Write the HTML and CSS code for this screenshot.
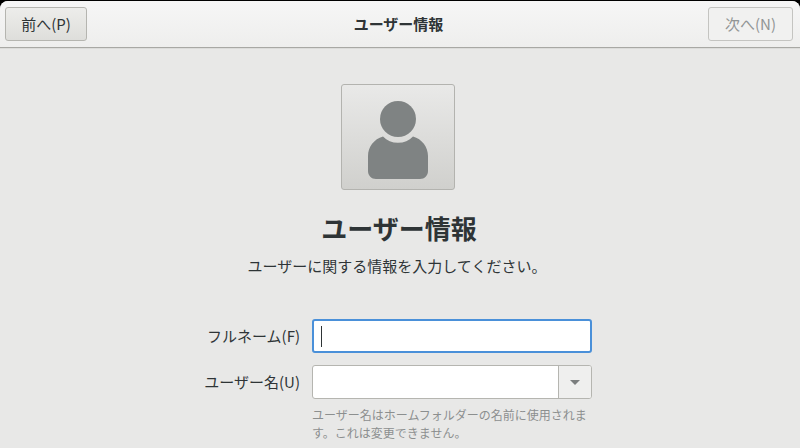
FILE: index.html
```html
<!DOCTYPE html>
<html lang="ja">
<head>
<meta charset="utf-8">
<title>ユーザー情報</title>
<link rel="stylesheet" href="styles.css">
</head>
<body>
<div class="window">
  <header class="headerbar">
    <button class="btn">前へ(P)</button>
    <div class="title">ユーザー情報</div>
    <button class="btn btn-disabled">次へ(N)</button>
  </header>
  <main class="content">
    <div class="avatar">
      <svg width="60" height="78" viewBox="0 0 60 78">
        <circle cx="30" cy="18" r="18" fill="#7f8383"/>
        <path d="M15 35.500C19 39.500 24 41.800 30 41.800C36 41.800 41 39.500 45 35.500C54 38 60 46 60 55L60 70C60 74.500 56.500 78 52 78L8 78C3.500 78 0 74.500 0 70L0 55C0 46 6 38 15 35.500Z" fill="#7f8383"/>
      </svg>
    </div>
    <h1 class="heading">ユーザー情報</h1>
    <p class="sub">ユーザーに関する情報を入力してください。</p>
    <div class="form">
      <label class="label">フルネーム(F)</label>
      <div class="entry entry-focus"><span class="caret"></span></div>
      <label class="label">ユーザー名(U)</label>
      <div class="combo">
        <div class="combo-text"></div>
        <div class="combo-btn"><span class="arrow"></span></div>
      </div>
      <div class="hint">ユーザー名はホームフォルダーの名前に使用されます。これは変更できません。</div>
    </div>
  </main>
</div>
</body>
</html>
```
FILE: styles.css
```css
* { box-sizing: border-box; }
html, body { margin: 0; height: 100%; background: #000; overflow: hidden; }
body { font-family: "Noto Sans CJK JP", "Noto Sans", sans-serif; color: #2e3436; }
.window { width: 800px; height: 448px; display: flex; flex-direction: column; background: #e8e8e7; border-radius: 8px 8px 0 0; overflow: hidden; margin-top: 1px; }
.headerbar { height: 47px; flex: none; display: flex; align-items: flex-start; justify-content: space-between; padding: 6px 5px 0; background: linear-gradient(#f6f6f6, #eeeeed); border-bottom: 1px solid #a8a8a4; position: relative; box-shadow: 0 1px 0 #dcdcda; }
.btn { width: 82px; height: 34px; font: 15px/20px "Noto Sans CJK JP", "Noto Sans", sans-serif; color: #2e3436; border: 1px solid #b5b5b0; border-radius: 3px; background: linear-gradient(#ededeb, #dededb); padding: 0 0 1px; }
.btn-disabled { color: #929595; background: #f1f1f0; border-color: #c4c4c1; width: 85px; margin-right: 2px; }
.title { font-size: 15px; font-weight: 700; line-height: 34px; margin-left: 2px; }
.content { flex: 1; display: flex; flex-direction: column; align-items: center; padding-top: 36px; }
.avatar { width: 114px; height: 106px; border: 1px solid #b3b3af; border-radius: 3px; background: linear-gradient(#e9e9e8, #d0d0cd); display: flex; justify-content: center; align-items: flex-end; padding-bottom: 10px; margin-left: -4px; }
.heading { font-size: 26px; line-height: 36px; font-weight: 700; margin: 20px 0 0 -2px; }
.sub { font-size: 15px; line-height: 20px; margin: 10px 0 0 -6px; }
.form { display: grid; grid-template-columns: 100px 280px; column-gap: 12px; row-gap: 12px; margin-top: 43px; margin-left: -8px; align-items: center; font-size: 15px; line-height: 20px; }
.label { text-align: right; }
.entry { height: 34px; background: #fff; border: 2px solid #4a90d9; border-radius: 3px; display: flex; align-items: center; padding-left: 7px; }
.caret { width: 1px; height: 21px; background: #2e3436; }
.combo { height: 34px; display: flex; background: #fff; border: 1px solid #b5b5b0; border-radius: 3px; overflow: hidden; }
.combo-text { flex: 1; }
.combo-btn { width: 33px; background: #efefee; border-left: 1px solid #b5b5b0; display: flex; align-items: center; justify-content: center; }
.arrow { width: 0; height: 0; border: 5px solid transparent; border-top: 5px solid #7b7e7e; border-bottom: 0; }
.hint { grid-column: 2; font-size: 12px; line-height: 18px; color: #8c8f8f; margin-top: -5px; }
```
